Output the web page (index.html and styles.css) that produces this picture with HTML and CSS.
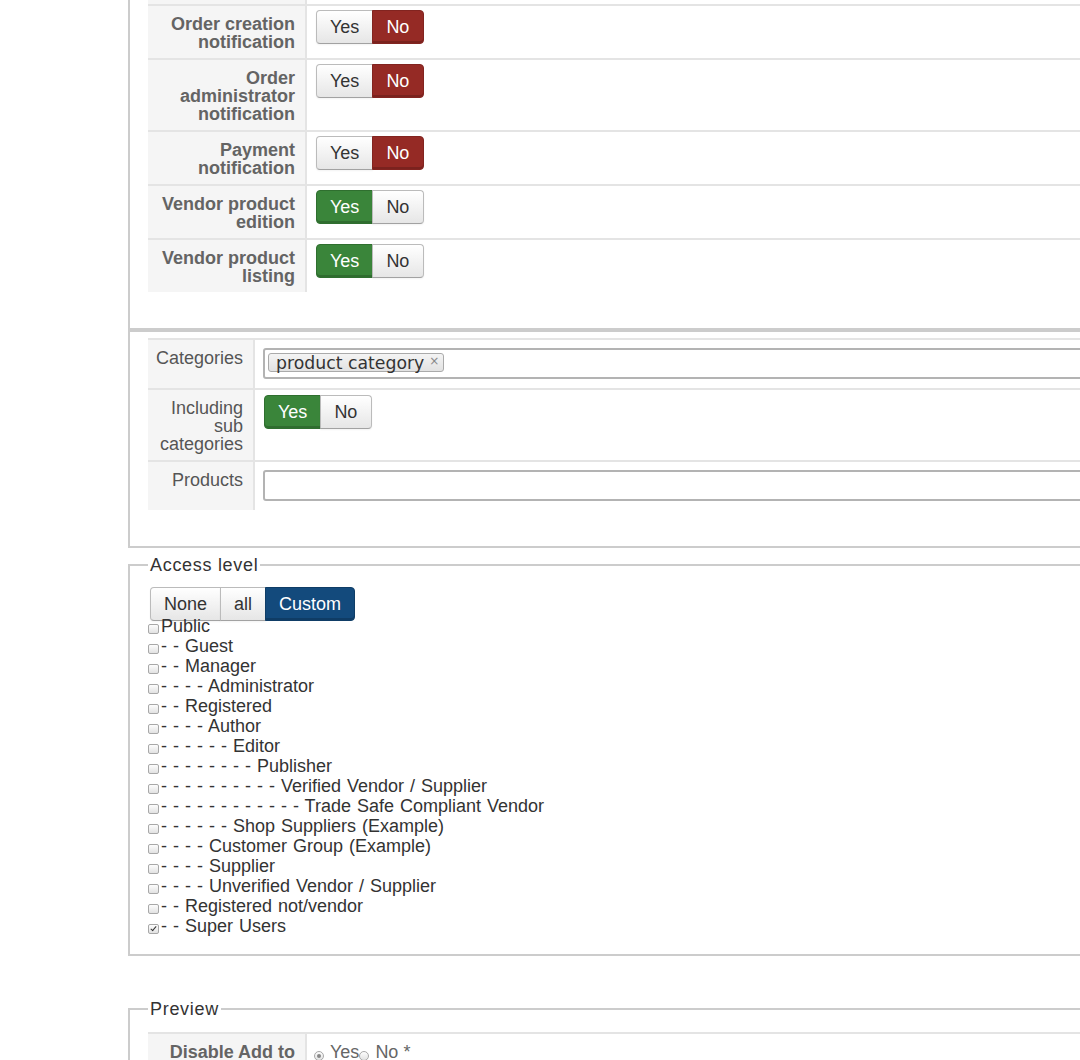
FILE: index.html
```html
<!DOCTYPE html>
<html lang="en">
<head>
<meta charset="utf-8">
<title>Vendor settings</title>
<link rel="stylesheet" href="styles.css">
</head>
<body>
<div class="page">

  <!-- Notification / vendor permissions -->
  <div class="panel panel-cut">
    <div class="form form-wide">
      <div class="row row-clip"><div class="label"></div><div class="value"></div></div>
      <div class="row">
        <div class="label label-strong">Order creation notification</div>
        <div class="value">
          <div class="btn-group"><span class="btn">Yes</span><span class="btn btn-no-on">No</span></div>
        </div>
      </div>
      <div class="row">
        <div class="label label-strong">Order administrator notification</div>
        <div class="value">
          <div class="btn-group"><span class="btn">Yes</span><span class="btn btn-no-on">No</span></div>
        </div>
      </div>
      <div class="row">
        <div class="label label-strong">Payment notification</div>
        <div class="value">
          <div class="btn-group"><span class="btn">Yes</span><span class="btn btn-no-on">No</span></div>
        </div>
      </div>
      <div class="row">
        <div class="label label-strong">Vendor product edition</div>
        <div class="value">
          <div class="btn-group"><span class="btn btn-yes-on">Yes</span><span class="btn">No</span></div>
        </div>
      </div>
      <div class="row">
        <div class="label label-strong">Vendor product listing</div>
        <div class="value">
          <div class="btn-group"><span class="btn btn-yes-on">Yes</span><span class="btn">No</span></div>
        </div>
      </div>
    </div>
  </div>

  <!-- Category / product filter -->
  <div class="panel">
    <div class="form form-narrow">
      <div class="row">
        <div class="label">Categories</div>
        <div class="value">
          <div class="field">
            <span class="tag">product category<span class="tag-close">×</span></span>
          </div>
        </div>
      </div>
      <div class="row">
        <div class="label">Including sub categories</div>
        <div class="value">
          <div class="btn-group"><span class="btn btn-yes-on">Yes</span><span class="btn">No</span></div>
        </div>
      </div>
      <div class="row">
        <div class="label">Products</div>
        <div class="value">
          <div class="field"></div>
        </div>
      </div>
    </div>
  </div>

  <!-- Access level -->
  <fieldset class="fieldset fieldset-access">
    <legend>Access level</legend>
    <div class="btn-group btn-group-access">
      <span class="btn">None</span><span class="btn">all</span><span class="btn btn-primary-on">Custom</span>
    </div>
    <ul class="access-list">
      <li><input type="checkbox" class="check">Public</li>
      <li><input type="checkbox" class="check">- - Guest</li>
      <li><input type="checkbox" class="check">- - Manager</li>
      <li><input type="checkbox" class="check">- - - - Administrator</li>
      <li><input type="checkbox" class="check">- - Registered</li>
      <li><input type="checkbox" class="check">- - - - Author</li>
      <li><input type="checkbox" class="check">- - - - - - Editor</li>
      <li><input type="checkbox" class="check">- - - - - - - - Publisher</li>
      <li><input type="checkbox" class="check">- - - - - - - - - - Verified Vendor / Supplier</li>
      <li><input type="checkbox" class="check">- - - - - - - - - - - - Trade Safe Compliant Vendor</li>
      <li><input type="checkbox" class="check">- - - - - - Shop Suppliers (Example)</li>
      <li><input type="checkbox" class="check">- - - - Customer Group (Example)</li>
      <li><input type="checkbox" class="check">- - - - Supplier</li>
      <li><input type="checkbox" class="check">- - - - Unverified Vendor / Supplier</li>
      <li><input type="checkbox" class="check">- - Registered not/vendor</li>
      <li><input type="checkbox" class="check" checked>- - Super Users</li>
    </ul>
  </fieldset>

  <!-- Preview -->
  <fieldset class="fieldset fieldset-preview">
    <legend>Preview</legend>
    <div class="form form-wide">
      <div class="row">
        <div class="label label-strong">Disable Add to Cart</div>
        <div class="value value-radios">
          <label class="radio-opt"><input type="radio" name="disable_cart" class="radio" checked>Yes</label><label class="radio-opt"><input type="radio" name="disable_cart" class="radio">No *</label>
        </div>
      </div>
    </div>
  </fieldset>

</div>
</body>
</html>
```

FILE: styles.css
```css
html, body {
  margin: 0;
  overflow: hidden;
  background: #fff;
}

body {
  font-family: "Liberation Sans", Arial, Helvetica, sans-serif;
  font-size: 18px;
  color: #333;
}

.page {
  width: 1320px;
  padding-left: 128px;
}

/* Bordered panels */
.panel {
  border: 2px solid #ccc;
  padding: 6px 20px 36px 18px;
}

.panel-cut {
  border-top: 0;
  padding-top: 0;
}

.fieldset {
  border: 2px solid #ccc;
  margin: 0;
  min-width: 0;
  padding: 12px 20px 18px 18px;
}

.fieldset legend {
  padding: 0 2px;
  font-size: 18px;
  line-height: 20px;
  letter-spacing: 0.7px;
  color: #333;
}

.fieldset-access {
  margin-top: 7px;
}

.fieldset-preview {
  margin-top: 43px;
  padding-top: 13px;
}

/* Label / value rows */
.form {
  display: flex;
  flex-direction: column;
}

.row {
  display: grid;
  grid-template-columns: 159px 1fr;
  border-top: 2px solid #e4e4e4;
}

.form-narrow .row {
  grid-template-columns: 107px 1fr;
}

.row-clip {
  border-top: 0;
  height: 4px;
}

.label {
  box-sizing: border-box;
  background: #f5f5f5;
  border-right: 2px solid #e4e4e4;
  padding: 9px 10px 7px 8px;
  text-align: right;
  line-height: 18px;
  color: #555;
}

.form-narrow .label {
  padding-left: 6px;
}

.label-strong {
  font-weight: bold;
  color: #646464;
}

.row-clip .label {
  padding: 0;
}

.value {
  padding: 4px 10px 8px 9px;
}

.form-narrow .value {
  padding: 5px 10px 9px 9px;
}

/* Text-like inputs */
.field {
  box-sizing: border-box;
  height: 31px;
  margin-top: 3px;
  margin-left: -1px;
  border: 2px solid #b3b3b3;
  border-radius: 3px;
  background: #fff;
  padding: 3px;
}

.tag {
  display: inline-block;
  box-sizing: border-box;
  height: 19px;
  padding: 0 4px 0 7px;
  border: 1px solid #aaa;
  border-radius: 3px;
  background: linear-gradient(#f4f4f4, #e2e2e2);
  font-family: "DejaVu Sans", Verdana, sans-serif;
  font-size: 17.3px;
  line-height: 19px;
  color: #333;
  white-space: nowrap;
}

.tag-close {
  display: inline-block;
  margin-left: 5px;
  font-size: 12px;
  line-height: 12px;
  vertical-align: 4px;
  color: #888;
}

/* Segmented buttons */
.btn-group {
  display: inline-flex;
  vertical-align: top;
}

.btn {
  display: inline-block;
  height: 34px;
  box-sizing: border-box;
  padding: 0 13px;
  border: 1px solid #bbb;
  border-bottom-color: #a2a2a2;
  background: linear-gradient(#fff, #e6e6e6);
  box-shadow: inset 0 1px 0 rgba(255, 255, 255, .3), 0 1px 2px rgba(0, 0, 0, .05);
  line-height: 33px;
  font-size: 18px;
  color: #333;
}

.btn + .btn {
  margin-left: -1px;
  padding-right: 14px;
}

.btn:first-child {
  border-radius: 4px 0 0 4px;
}

.btn:last-child {
  border-radius: 0 4px 4px 0;
}

.btn-no-on,
.btn-yes-on,
.btn-primary-on {
  color: #fff;
  box-shadow: inset 0 -2px 0 rgba(0, 0, 0, .18);
}

.btn-no-on {
  background: #952a25;
  border-color: #822420;
}

.btn-yes-on {
  background: #3a853a;
  border-color: #2f6f2f;
}

.btn-primary-on {
  background: #134a7c;
  border-color: #0f3d66;
}

.btn-group-access {
  margin-left: 2px;
  margin-bottom: -5px;
}

.btn-group-access .btn,
.btn-group-access .btn + .btn {
  padding: 0 13px;
}

/* Group checkbox list */
.access-list {
  list-style: none;
  margin: 0;
  padding: 0;
}

.access-list li {
  line-height: 20px;
  white-space: nowrap;
  word-spacing: 1px;
  color: #333;
}

.check,
.radio {
  -webkit-appearance: none;
  appearance: none;
  position: relative;
  box-sizing: border-box;
  margin: 0 2px 0 0;
  border: 1px solid #a8a8a8;
  background: linear-gradient(#fdfdfd, #e2e2e2);
}

.check {
  width: 11px;
  height: 10px;
  border-radius: 2px;
  vertical-align: -2px;
}

.check:checked::after {
  content: "";
  position: absolute;
  left: 3px;
  top: 0;
  width: 2px;
  height: 5px;
  border: solid #333;
  border-width: 0 1.5px 1.5px 0;
  transform: rotate(40deg);
}

/* Preview radios */
.value-radios {
  padding: 9px 10px 7px 7px;
  line-height: 18px;
  color: #666;
}

.radio-opt {
  white-space: nowrap;
}

.radio {
  width: 10px;
  height: 10px;
  border-radius: 50%;
  margin: 0 6px 0 0;
  vertical-align: -3px;
}

.radio:checked::after {
  content: "";
  position: absolute;
  left: 2px;
  top: 2px;
  width: 4px;
  height: 4px;
  border-radius: 50%;
  background: #888;
}
```
